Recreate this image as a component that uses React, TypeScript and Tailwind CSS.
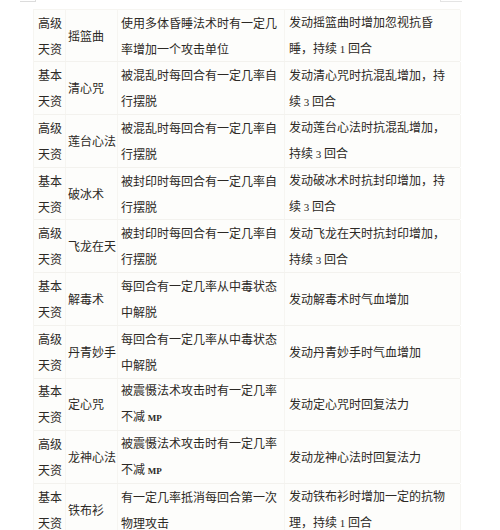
import React from "react";

type Row = { a: string; b: string; c: React.ReactNode[]; d: React.ReactNode[] };

const N = ({ children }: { children: React.ReactNode }) => (
  <span className="text-[11px] font-['Liberation_Serif',serif]">{children}</span>
);
const MP = () => (
  <span className="text-[9px] font-bold font-['Liberation_Serif',serif]">MP</span>
);

const c1 = ["被混乱时每回合有一定几率自", "行摆脱"];
const c2 = ["被封印时每回合有一定几率自", "行摆脱"];
const c3 = ["每回合有一定几率从中毒状态", "中解脱"];
const c4 = ["被震慑法术攻击时有一定几率", <>不减 <MP /></>];

const rows: Row[] = [
  {
    a: "高级",
    b: "摇篮曲",
    c: ["使用多体昏睡法术时有一定几", "率增加一个攻击单位"],
    d: ["发动摇篮曲时增加忽视抗昏", <>睡，持续 <N>1</N> 回合</>],
  },
  { a: "基本", b: "清心咒", c: c1, d: ["发动清心咒时抗混乱增加，持", <>续 <N>3</N> 回合</>] },
  { a: "高级", b: "莲台心法", c: c1, d: ["发动莲台心法时抗混乱增加，", <>持续 <N>3</N> 回合</>] },
  { a: "基本", b: "破冰术", c: c2, d: ["发动破冰术时抗封印增加，持", <>续 <N>3</N> 回合</>] },
  { a: "高级", b: "飞龙在天", c: c2, d: ["发动飞龙在天时抗封印增加，", <>持续 <N>3</N> 回合</>] },
  { a: "基本", b: "解毒术", c: c3, d: ["发动解毒术时气血增加"] },
  { a: "高级", b: "丹青妙手", c: c3, d: ["发动丹青妙手时气血增加"] },
  { a: "基本", b: "定心咒", c: c4, d: ["发动定心咒时回复法力"] },
  { a: "高级", b: "龙神心法", c: c4, d: ["发动龙神心法时回复法力"] },
  {
    a: "基本",
    b: "铁布衫",
    c: ["有一定几率抵消每回合第一次", "物理攻击"],
    d: ["发动铁布衫时增加一定的抗物", <>理，持续 <N>1</N> 回合</>],
  },
];

const cell = "flex flex-col justify-center border-r border-[#f6f5f1] leading-[26px] whitespace-nowrap overflow-hidden";

export default function App() {
  return (
    <div className="w-[500px] h-[530px] overflow-hidden bg-white font-['Noto_Sans_CJK_SC',sans-serif] text-[12px] text-[#2c2925]">
      <div className="h-[8.7px] flex">
        <div className="ml-[20px] w-[16px] h-[2px] border-b border-r border-[#dcdcdc]" />
        <div className="ml-[404px] w-[22px] h-[2px] border-b border-l border-[#e4e4e4]" />
      </div>
      <div className="ml-[33px] w-[427px] border-l border-t border-[#f6f5f1] flex flex-col">
        {rows.map((r, i) => (
          <div
            key={i}
            className="grid grid-cols-[32px_52px_167px_176px] h-[52.7px] shrink-0 bg-[#fdfdfb] border-b border-[#f3f2ee]"
          >
            <div className={`${cell} pl-[4px]`}>
              <div>{r.a}</div>
              <div>天资</div>
            </div>
            <div className={`${cell} pl-[2px]`}>{r.b}</div>
            <div className={`${cell} pl-[3px]`}>
              {r.c.map((l, j) => (
                <div key={j}>{l}</div>
              ))}
            </div>
            <div className={`${cell} pl-[4px]`}>
              {r.d.map((l, j) => (
                <div key={j}>{l}</div>
              ))}
            </div>
          </div>
        ))}
      </div>
    </div>
  );
}
